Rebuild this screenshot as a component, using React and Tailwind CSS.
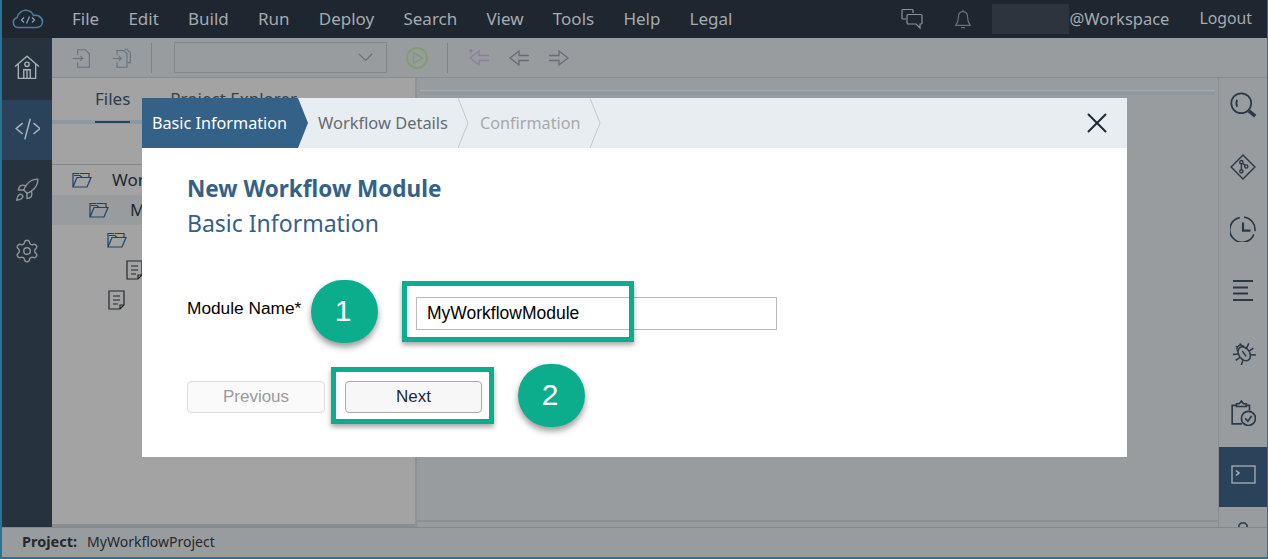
import { Rocket, Settings, X } from 'lucide-react';

const MENU = ['File', 'Edit', 'Build', 'Run', 'Deploy', 'Search', 'View', 'Tools', 'Help', 'Legal'];

const Svg = ({ size = 24, className = '', strokeWidth = 1.5, children }) => (
  <svg
    width={size}
    height={size}
    viewBox="0 0 24 24"
    fill="none"
    stroke="currentColor"
    strokeWidth={strokeWidth}
    className={className}
  >
    {children}
  </svg>
);

const CloudLogo = () => (
  <svg width="32" height="20" viewBox="0 0 32 20" fill="none" stroke="#4f7d9c" strokeWidth="1.6">
    <path d="M8 18.5H6a5 5 0 0 1-1-9.8C6 3.5 11 .6 15.500 1.500c3 .6 5 2.500 6 5 4-.8 9 1.500 9 6.300 0 3.500-2.500 5.700-6 5.700Z" />
    <path d="M12 8.500 9.500 11l2.500 2.500M20 8.500l2.500 2.500-2.500 2.500M17.500 7.500l-3 7" strokeWidth="1.200" stroke="#8aa6ba" />
  </svg>
);

const Chat = () => (
  <Svg size={24} className="text-[#8b9197]" strokeWidth={1.2}>
    <path d="M13 6V3.500a1 1 0 0 0-1-1H3a1 1 0 0 0-1 1V11a1 1 0 0 0 1 1h3" />
    <path d="M8 7.500h13a1 1 0 0 1 1 1V16a1 1 0 0 1-1 1h-1v4l-4-4H8a1 1 0 0 1-1-1V8.500a1 1 0 0 1 1-1Z" />
  </Svg>
);

const BellIcon = () => (
  <Svg size={22} className="text-[#6a7279]" strokeWidth={1.3}>
    <path d="M12 2v2M12 4c-3.500 0-5 2.500-5 6 0 5-2 7.500-3 9h16c-1-1.500-3-4-3-9 0-3.500-1.500-6-5-6ZM10 21.500h4" />
  </Svg>
);

const HomeIcon = () => (
  <Svg size={26} className="text-[#a8aeb3]" strokeWidth={1.300}>
    <path d="M1 11.500 12 2l11 9.500M4 9v13.500h16V9" />
    <circle cx="12" cy="9.500" r="2" />
    <path d="M9 22.500V14.500h6v8M12 14.500v8" />
  </Svg>
);

const CodeIcon = () => (
  <Svg size={26} className="text-[#b3b8bc]" strokeWidth={1.300}>
    <path d="M8 7.500 2 12.500l6 5M18 7.500l6 5-6 5M15 3.500l-5 19" />
  </Svg>
);

const FileIn = ({ double }) => (
  <Svg size={20} className="text-[#66717b]" strokeWidth={1.300}>
    {double && <path d="M15 1.500h3l4 4v12h-3" />}
    <path d={double ? 'M6 8V3h8l4 4v16H6v-6' : 'M8 8V2h9l5 5v16H8v-6'} />
    <path d={double ? 'M1 12.500h10M8 9.500l3 3-3 3' : 'M2 12.500h12M11 9.500l3 3-3 3'} />
  </Svg>
);

const RunIcon = () => (
  <svg width="24" height="24" viewBox="0 0 24 24" fill="none" stroke="#7f9f72" strokeWidth="2">
    <circle cx="12" cy="12" r="10" />
    <path d="M8.500 6.500 17.500 12l-9 5.500Z" strokeWidth="1.500" />
  </svg>
);

const ArrowIcon = ({ dir, color, star }) => (
  <svg width="22" height="18" viewBox="0 0 22 18" fill="none" stroke={color} strokeWidth="1.300">
    {dir === 'left' ? (
      <path d="M21 6.500H11V2L2 9l9 7v-4.500h10" />
    ) : (
      <path d="M1 6.500h10V2l9 7-9 7v-4.500H1" />
    )}
    {star && <path d="M1 1.500h4M3 0v4" />}
  </svg>
);

const FolderOpen = () => (
  <svg width="20" height="16" viewBox="0 0 20 16" fill="none" stroke="#1d4468" strokeWidth="1.200">
    <path d="M1 15V1.500h6.500M8 1.500h9v4M1 15h14l4-9.500H5L1 15ZM2 3.500h6l2 2" />
  </svg>
);

const DocIcon = () => (
  <svg width="17" height="20" viewBox="0 0 17 20" fill="none" stroke="#22292f" strokeWidth="1.200">
    <path d="M1 1h15v14l-4 4H1ZM12 19v-4h4M5 6h7M5 10h7M5 14h5" />
  </svg>
);

const SearchIcon = () => (
  <Svg size={28} className="text-[#2b3946]" strokeWidth={1.500}>
    <circle cx="10.500" cy="10.500" r="8.500" />
    <path d="M17 17l5.500 4.500" strokeWidth="3" />
    <path d="M7 7.500c-1 2-1 4 0 6" />
  </Svg>
);

const GitIcon = () => (
  <Svg size={26} className="text-[#2b3946]" strokeWidth={1.300}>
    <path d="M12 1 23 12 12 23 1 12Z" />
    <circle cx="10.500" cy="7.500" r="1.500" />
    <circle cx="10.500" cy="16" r="1.500" />
    <circle cx="15" cy="11.500" r="1.500" />
    <path d="M10.500 9v5.500M11.500 8.500l2.500 2" />
  </Svg>
);

const ClockIcon = () => (
  <Svg size={26} className="text-[#2b3946]" strokeWidth={1.500}>
    <path d="M13 1a12 11.500 0 0 1 10 13M22 17a11.500 11.500 0 1 1-13-15.500" />
    <path d="M12 6v7.500h7" strokeWidth="2" />
  </Svg>
);

const ListIcon = () => (
  <svg width="20" height="21" viewBox="0 0 20 21" stroke="#2b3946" strokeWidth="2">
    <path d="M0 1h20M0 7.500h15M0 13.500h15M0 20h20" />
  </svg>
);

// tilted beetle from the debugger tab
const BugIcon = () => (
  <Svg size={26} className="text-[#2b3946]" strokeWidth={1.400}>
    <g transform="rotate(-35 12 12)">
      <ellipse cx="12" cy="14" rx="5" ry="7" />
      <path d="M8.500 8.500a3.500 3.500 0 0 1 7 0M12 11v6M9.500 4 10.500 6M14.500 4l-1 2" />
      <path d="M7.500 11 3 8.500M16.500 11 21 8.500M7 14.500H2M17 14.500h5M7.800 18l-4 3M16.200 18l4 3" />
    </g>
  </Svg>
);

const ClipCheck = () => (
  <Svg size={26} className="text-[#2b3946]" strokeWidth={1.500}>
    <path d="M11 22H2V5h4M15 5h3v5M6 6V3.500h2.500L10.500 1l2 2.500H15V6Z" />
    <circle cx="17" cy="17" r="6.500" />
    <path d="m14 17 2.500 2.500 3.500-5" />
  </Svg>
);

const Terminal = () => (
  <svg width="25" height="19" viewBox="0 0 25 19" fill="none" stroke="#a9aeb3" strokeWidth="1.300">
    <rect x="1" y="1" width="23" height="17" />
    <path d="m5 5.500 3 2.500-3 2.500" strokeWidth="1.600" />
  </svg>
);

const Step = ({ children, muted }) => (
  <div className={`flex h-full items-center pl-[10px] ${muted ? 'text-[16.200px] text-[#a8a8a8]' : 'text-[16.450px] text-[#666b70]'}`}>
    {children}
    <svg width="11" height="50" viewBox="0 0 11 50" fill="none" stroke="#c3c7ca" className="ml-[10px]">
      <path d="M0 0l10 25L0 50" />
    </svg>
  </div>
);

const Callout = ({ className, children }) => (
  <div className={`absolute flex h-[63px] w-[67px] items-center justify-center rounded-full bg-[#0bad8c] pb-[2px] pr-[3px] font-['Liberation_Sans',sans-serif] text-[30px] text-white shadow-[0_4px_6px_rgba(0,0,0,0.4)] ${className}`}>
    {children}
  </div>
);

const Highlight = ({ className }) => (
  <div className={`absolute border-[5px] border-[#0bad8c] shadow-[0_3px_5px_rgba(0,0,0,0.35)] ${className}`} />
);

export default function App() {
  return (
    <div className="relative flex h-[559px] w-[1268px] flex-col overflow-hidden border-b-2 border-l-2 border-r border-[#2b7393] bg-[#999c9f] font-['Noto_Sans',sans-serif]">
      {/* Top menu */}
      <header className="flex h-[38px] shrink-0 items-center bg-[#1e2630] text-[17px] text-[#a5abb0]">
        <div className="ml-[10px] flex w-[60px]">
          <CloudLogo />
        </div>
        <nav className="flex gap-[29.200px]">
          {MENU.map((m) => (
            <span key={m}>{m}</span>
          ))}
        </nav>
        <div className="ml-auto flex items-center">
          <Chat />
          <div className="ml-[28px]">
            <BellIcon />
          </div>
          <div className="ml-[18px] h-[30px] w-[77px] bg-[#2d343d]" />
          <span className="text-[16.500px]">@Workspace</span>
          <span className="ml-[30px] mr-[15px] text-[15.800px]">Logout</span>
        </div>
      </header>

      <div className="flex min-h-0 flex-1">
        {/* Left rail */}
        <aside className="flex w-[50px] shrink-0 flex-col bg-[#26323d]">
          <div className="flex h-[62px] items-center justify-center pb-[4px]">
            <HomeIcon />
          </div>
          <div className="flex h-[60px] items-center justify-center bg-[#2a435b] pb-[4px]">
            <CodeIcon />
          </div>
          <div className="flex h-[63px] items-center justify-center pb-[3px] text-[#8f9499]">
            <Rocket size={26} strokeWidth={1.3} />
          </div>
          <div className="flex h-[60px] items-center justify-center pb-[4px] text-[#8f9499]">
            <Settings size={26} strokeWidth={1.3} />
          </div>
        </aside>

        <div className="flex min-w-0 flex-1 flex-col">
          {/* Toolbar */}
          <div className="flex h-[40px] shrink-0 items-center border-b border-[#8a8d90] bg-[#999c9e] pl-[19px]">
            <FileIn />
            <div className="ml-[21px]">
              <FileIn double />
            </div>
            <div className="ml-[19px] h-[30px] w-px bg-[#7f8285]" />
            <div className="ml-[22px] flex h-[31px] w-[213px] items-center justify-end border border-[#85888b] pr-[13px]">
              <svg width="15" height="9" viewBox="0 0 15 9" fill="none" stroke="#6a6f74" strokeWidth="1.200">
                <path d="m1 1 6.500 6.500L14 1" />
              </svg>
            </div>
            <div className="ml-[18px]">
              <RunIcon />
            </div>
            <div className="ml-[18px] h-[30px] w-px bg-[#7f8285]" />
            <div className="ml-[20px]">
              <ArrowIcon dir="left" color="#8d7f9b" star />
            </div>
            <div className="ml-[18px]">
              <ArrowIcon dir="left" color="#676d74" />
            </div>
            <div className="ml-[18px]">
              <ArrowIcon dir="right" color="#676d74" />
            </div>
          </div>

          <div className="flex min-h-0 flex-1">
            {/* Files panel */}
            <div className="flex w-[363px] shrink-0 flex-col border-b-[3px] border-[#8b8e91] bg-[#a3a3a3] text-[17px] text-[#22292f]">
              <div className="flex h-[46px] shrink-0 border-b-[4px] border-[#8f979f] pl-[43px]">
                <div className="relative h-full pt-[8px] text-[#2e3b4b]">
                  Files
                  <div className="absolute -bottom-[3px] left-0 h-[2px] w-full bg-[#2a435b]" />
                </div>
                <span className="ml-[40px] pt-[8px] text-[#3a4048]">Project Explorer</span>
              </div>
              <div className="mt-[40px] border-t border-[#85888b]">
                <div className="flex h-[30px] items-center pl-[20px]">
                  <FolderOpen />
                  <span className="ml-[20px]">Workflow</span>
                </div>
                <div className="flex h-[30px] items-center bg-[#999c9f] pl-[37px]">
                  <FolderOpen />
                  <span className="ml-[21px]">MyWorkflow</span>
                </div>
                <div className="flex h-[30px] items-center pl-[55px]">
                  <FolderOpen />
                </div>
                <div className="flex h-[30px] items-center pl-[74px]">
                  <DocIcon />
                </div>
                <div className="flex h-[30px] items-center pl-[56px]">
                  <DocIcon />
                </div>
              </div>
            </div>

            {/* Splitter */}
            <div className="w-[2px] shrink-0 bg-[#8f9295]" />

            {/* Editor */}
            <div className="flex min-w-0 flex-1 flex-col">
              <div className="mx-[3px] mt-[12px] h-[5px] border-b-[3px] border-t border-[#8f979f] border-t-[#a8a8a8]" />
              <div className="flex-1" />
              <div className="mb-[5px] h-[2px] bg-[#8d8f91]" />
            </div>

            {/* Right rail */}
            <aside className="flex w-[49px] shrink-0 flex-col items-center overflow-hidden border-l border-[#8a8d90]">
              <div className="mb-[4px] flex h-[54px] shrink-0 items-center justify-center">
                <SearchIcon />
              </div>
              <div className="flex h-[62px] shrink-0 items-center justify-center">
                <GitIcon />
              </div>
              <div className="flex h-[62px] shrink-0 items-center justify-center">
                <ClockIcon />
              </div>
              <div className="flex h-[61px] shrink-0 items-center justify-center">
                <ListIcon />
              </div>
              <div className="flex h-[61px] shrink-0 items-center justify-center">
                <BugIcon />
              </div>
              <div className="mb-[3px] flex h-[62px] shrink-0 items-center justify-center">
                <ClipCheck />
              </div>
              <div className="flex h-[60px] w-full shrink-0 items-center justify-center bg-[#2a435b] pb-[6px]">
                <Terminal />
              </div>
              <svg width="10" height="5" viewBox="0 0 10 5" fill="none" stroke="#2b3946" strokeWidth="1.500" className="mt-[15px] shrink-0">
                <path d="M1 5V3l2-2h4l2 2v2" />
              </svg>
            </aside>
          </div>
        </div>
      </div>

      {/* Status bar */}
      <footer className="flex h-[30px] shrink-0 items-center border-t border-[#85888b] pb-[2px] pl-[20px] text-[14px] text-[#25292e]">
        <span className="text-[14.500px] font-bold">Project:</span>
        <span className="ml-[10px]">MyWorkflowProject</span>
      </footer>
      <div className="absolute -bottom-[2px] left-[327px] h-[2px] w-[38px] bg-[#e6c36a]" />

      {/* Wizard dialog */}
      <div className="absolute left-[140px] top-[98px] h-[359px] w-[985px] bg-white">
        <div className="flex h-[50px] items-center bg-[#e8edf1]">
          <div className="flex h-full w-[166px] items-center bg-[#346187] pl-[10px] text-[16.200px] text-white [clip-path:polygon(0_0,156px_0,166px_25px,156px_50px,0_50px)]">
            Basic Information
          </div>
          <div className="flex h-full items-center">
            <Step>Workflow Details</Step>
            <div className="ml-[1px] h-full">
              <Step muted>Confirmation</Step>
            </div>
          </div>
          <X size={34} strokeWidth={1.4} className="ml-auto mr-[13px] text-[#1c2a38]" />
        </div>

        <div className="relative px-[45px] pt-[24px]">
          <h1 className="text-[22.500px] font-bold leading-[34px] text-[#346187]">New Workflow Module</h1>
          <h2 className="text-[23px] leading-[34px] text-[#346187]">Basic Information</h2>

          <div className="mt-[57px] flex h-[33px] items-center font-['Liberation_Sans',sans-serif] text-[17.300px] text-black">
            <label className="w-[229px] -translate-y-[5px]">Module Name*</label>
            <div className="flex h-[33px] w-[361px] items-center border border-[#bbbbbb] pl-[10px] text-[17.500px]">
              MyWorkflowModule
            </div>
          </div>

          <div className="mt-[51px] flex gap-[20px] font-['Liberation_Sans',sans-serif] text-[17px]">
            <button className="h-[32px] w-[138px] rounded border border-[#dcdcdc] bg-[#fafafa] text-[#9a9a9a]">
              Previous
            </button>
            <button className="h-[32px] w-[137px] rounded border border-[#a9a9a9] bg-[#f7f7f7] text-[#1e2a38]">
              Next
            </button>
          </div>

          <Callout className="left-[169px] top-[132px]">1</Callout>
          <Callout className="left-[376px] top-[216px]">2</Callout>
          <Highlight className="left-[260px] top-[133px] h-[61px] w-[232px]" />
          <Highlight className="left-[189px] top-[219px] h-[57px] w-[163px]" />
        </div>
      </div>
    </div>
  );
}
